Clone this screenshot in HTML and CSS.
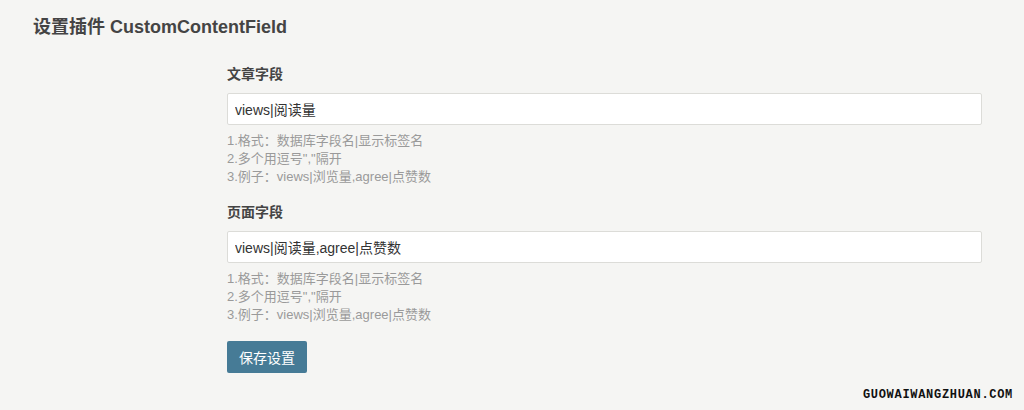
FILE: index.html
```html
<!DOCTYPE html>
<html lang="zh-CN">
<head>
  <meta charset="UTF-8" />
  <title>设置插件 CustomContentField</title>
  <meta name="viewport" content="width=device-width, initial-scale=1" />
  <link rel="stylesheet" href="styles.css">
</head>
<body>

<div class="page-title">
  <h2>设置插件 CustomContentField</h2>
</div>

<form class="options" action="#" method="post">
  <div class="option">
    <label class="option-label" for="postFields">文章字段</label>
    <input type="text" id="postFields" class="text" value="views|阅读量" />
    <div class="desc">
      <p>1.格式：数据库字段名|显示标签名</p>
      <p>2.多个用逗号","隔开</p>
      <p>3.例子：views|浏览量,agree|点赞数</p>
    </div>
  </div>

  <div class="option">
    <label class="option-label" for="pageFields">页面字段</label>
    <input type="text" id="pageFields" class="text" value="views|阅读量,agree|点赞数" />
    <div class="desc">
      <p>1.格式：数据库字段名|显示标签名</p>
      <p>2.多个用逗号","隔开</p>
      <p>3.例子：views|浏览量,agree|点赞数</p>
    </div>
  </div>

  <div class="submit">
    <button type="submit" class="btn-primary">保存设置</button>
  </div>
</form>

<div class="watermark">GUOWAIWANGZHUAN.COM</div>

</body>
</html>
```

FILE: styles.css
```css
body {
  margin: 0;
  padding: 15px 33px 0;
  height: 395px;
  font-family: 'Liberation Sans', 'Noto Sans CJK SC', sans-serif;
  font-size: 14px;
  background: #f5f5f3;
  color: #444;
  position: relative;
  overflow: hidden;
}
.page-title h2 {
  margin: 0;
  font-size: 18px;
  line-height: 25px;
  font-weight: bold;
  color: #444;
}
.options {
  margin: 24px 0 0 194px;
  width: 755px;
}
.option {
  margin-bottom: 16px;
}
.option-label {
  display: block;
  font-weight: bold;
  font-size: 14px;
  line-height: 20px;
  margin-bottom: 9px;
}
.text {
  display: block;
  box-sizing: border-box;
  width: 100%;
  height: 32px;
  padding: 0 7px;
  border: 1px solid #dcdcd8;
  border-radius: 2px;
  background: #fff;
  font-family: inherit;
  font-size: 14px;
  color: #333;
  outline: none;
}
.desc {
  margin-top: 7px;
  font-size: 13px;
  line-height: 18px;
  color: #9a9a9a;
}
.desc p {
  margin: 0;
}
.submit {
  padding-top: 1px;
}
.btn-primary {
  height: 32px;
  padding: 0 12px;
  border: none;
  border-radius: 2px;
  background: #467b96;
  color: #fff;
  font-family: inherit;
  font-size: 14px;
  cursor: pointer;
}
.watermark {
  position: absolute;
  right: 11px;
  bottom: 8px;
  font-family: 'Liberation Mono', monospace;
  font-weight: bold;
  font-size: 12px;
  letter-spacing: 0.7px;
  color: #111;
}
```
